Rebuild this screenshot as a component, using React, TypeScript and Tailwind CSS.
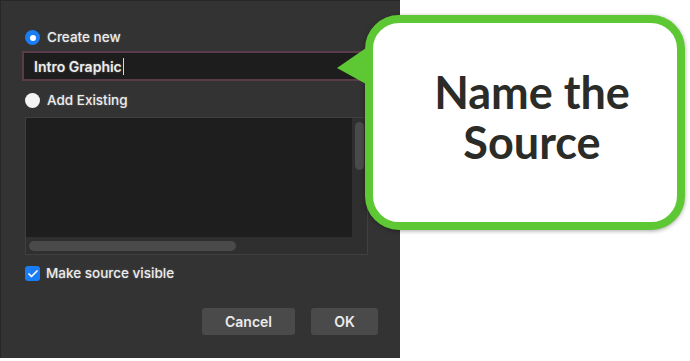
import { Check } from 'lucide-react'

const sys = { fontFamily: 'Inter, "Open Sans", sans-serif' }

function Radio({ checked }: { checked: boolean }) {
    return checked ? (
        <span className="flex h-[15px] w-[15px] items-center justify-center rounded-full bg-[#1b7df6]">
            <span className="h-[6px] w-[6px] rounded-full bg-white" />
        </span>
    ) : (
        <span className="h-[15px] w-[15px] rounded-full bg-[#f4f4f4]" />
    )
}

export default function App() {
    return (
        <div className="relative flex h-[361px] w-[690px] overflow-hidden bg-white" style={sys}>
            <div className="flex h-[358px] w-[400px] flex-col border-l border-t border-[#272727] bg-[#333333] pl-[24px] text-[13.5px] font-medium text-[#ececec] [text-shadow:0_0_2px_#6a6a6a]">
                <div className="mt-[28px] flex h-[17px] items-center gap-[7px]">
                    <Radio checked />
                    <span>Create new</span>
                </div>
                <div className="ml-[-3px] mt-[5px] flex h-[30px] w-[345px] items-center border-2 border-[#5a3b4a] bg-[#1d1d1d] pl-[10px] text-[14px] font-semibold">
                    Intro Graphic<span className="ml-[1px] h-[17px] w-px bg-[#d8d8d8]" />
                </div>
                <div className="mt-[11px] flex h-[17px] items-center gap-[7px]">
                    <Radio checked={false} />
                    <span>Add Existing</span>
                </div>
                <div className="mt-[8px] flex h-[138px] w-[343px] flex-col border border-[#404040] bg-[#2f2f2f]">
                    <div className="flex flex-1">
                        <div className="flex-1 bg-[#1e1e1e]" />
                        <div className="w-[15px] px-[3px] pt-[4px]">
                            <div className="h-[48px] rounded-full bg-[#4a4a4a]" />
                        </div>
                    </div>
                    <div className="flex h-[17px] items-center px-[3px]">
                        <div className="h-[10px] w-[207px] rounded-full bg-[#4a4a4a]" />
                    </div>
                </div>
                <div className="mt-[10px] flex h-[17px] items-center gap-[6px]">
                    <span className="flex h-[15px] w-[15px] items-center justify-center rounded-[3px] bg-[#1b7df6]">
                        <Check className="h-[12px] w-[12px] text-white" strokeWidth={3.5} />
                    </span>
                    <span>Make source visible</span>
                </div>
                <div className="mt-[26px] flex justify-end gap-[16px] pr-[22px] text-[14px] font-semibold">
                    <button className="h-[27px] w-[93px] rounded-[3px] bg-[#4a4a4a]">Cancel</button>
                    <button className="h-[27px] w-[67px] rounded-[3px] bg-[#4a4a4a]">OK</button>
                </div>
            </div>

            <div className="absolute left-[365px] top-[15px] flex h-[215px] w-[320px] items-center justify-center rounded-[34px] border-[8px] border-[#5ec734] bg-white pb-[12px] pl-[14px] shadow-[0_1px_4px_rgba(0,0,0,0.35)]">
                <p
                    className="text-center text-[45px] font-bold leading-[50px] text-[#2b2b27]"
                    style={{ fontFamily: 'Lato, "Open Sans", sans-serif' }}
                >
                    Name the
                    <br />
                    Source
                </p>
            </div>
            <svg className="absolute left-[336px] top-[44px]" width="40" height="44" viewBox="0 0 40 44">
                <polygon points="1,24 30,4 30,40" fill="#5ec734" />
            </svg>
        </div>
    )
}
